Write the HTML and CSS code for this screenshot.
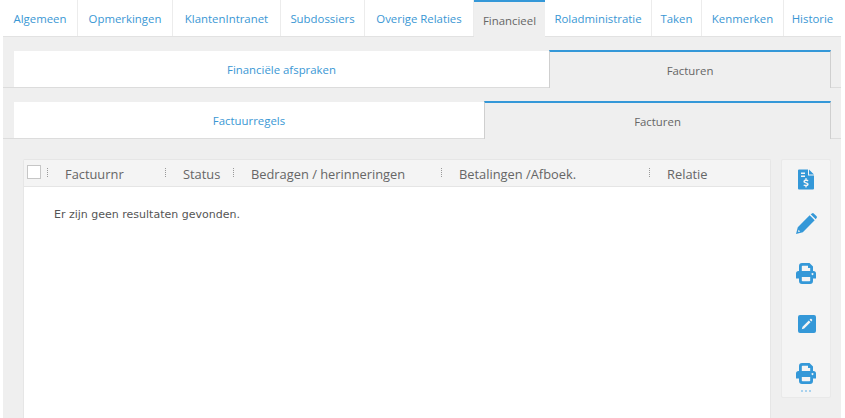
FILE: index.html
```html
<!DOCTYPE html>
<html lang="nl">
<head>
<meta charset="utf-8">
<title>Facturen</title>
<link rel="stylesheet" href="styles.css">
</head>
<body>
<div class="page">
  <nav class="tabs main-tabs">
    <a class="tab w75">Algemeen</a>
    <a class="tab w95">Opmerkingen</a>
    <a class="tab w108">KlantenIntranet</a>
    <a class="tab w84">Subdossiers</a>
    <a class="tab w109">Overige Relaties</a>
    <a class="tab active w71">Financieel</a>
    <a class="tab w107">Roladministratie</a>
    <a class="tab w50">Taken</a>
    <a class="tab w82">Kenmerken</a>
    <a class="tab w57">Historie</a>
  </nav>
  <nav class="subtabs first">
    <a class="subtab s535">Financiële afspraken</a>
    <a class="subtab active s282">Facturen</a>
  </nav>
  <nav class="subtabs second">
    <a class="subtab s470">Factuurregels</a>
    <a class="subtab active s347">Facturen</a>
  </nav>
  <div class="content">
    <section class="grid">
      <header class="grid-head">
        <span class="check"></span>
        <span class="col c1"><i class="grip"></i><b>Factuurnr</b></span>
        <span class="col c2"><i class="grip"></i><b>Status</b></span>
        <span class="col c3"><i class="grip"></i><b>Bedragen / herinneringen</b></span>
        <span class="col c4"><i class="grip"></i><b>Betalingen /Afboek.</b></span>
        <span class="col c5"><i class="grip"></i><b>Relatie</b></span>
      </header>
      <p class="empty">Er zijn geen resultaten gevonden.</p>
    </section>
    <aside class="actions">
      <svg class="icon i1" viewBox="0 0 16 20"><path fill-rule="evenodd" d="M1 0H10V6H16V19a1 1 0 0 1-1 1H1a1 1 0 0 1-1-1V1a1 1 0 0 1 1-1ZM11 0 16 5H11ZM3 3V4.500H7V3ZM3 6V7.500H7V6ZM7.400 8.500V10C6 10.300 5.400 11.100 5.400 12.100C5.400 14.300 9 13.700 9 14.900C9 15.500 7.500 15.500 5.900 14.900L5.500 16.300C6.100 16.600 6.800 16.700 7.400 16.800V18H8.600V16.800C10 16.500 10.600 15.800 10.600 14.800C10.600 12.500 7 13.100 7 12C7 11.400 8.500 11.400 10 12L10.400 10.600C9.800 10.300 9.200 10.100 8.600 10.100V8.500Z"/></svg>
      <svg class="icon i2" viewBox="0 0 20 20"><path fill-rule="evenodd" d="M14 1.200 15.200.4a1.500 1.500 0 0 1 1.900.2L19.400 2.900a1.500 1.500 0 0 1 .2 1.900L18.800 6ZM13 2.200 17.800 7 6.500 18.300 0 20 1.700 13.500ZM2.400 16 2 18 4 17.600Z"/></svg>
      <svg class="icon i3" viewBox="0 0 20 21"><path fill-rule="evenodd" d="M6 0H13.500L17 3.500V8H17.500A2.500 2.500 0 0 1 20 10.500V15.500H17V18A3 3 0 0 1 14 21H6A3 3 0 0 1 3 18V15.500H0V10.500A2.500 2.500 0 0 1 2.500 8H3V3A3 3 0 0 1 6 0ZM6.500 2.800C6 2.800 5.800 3 5.800 3.500V8H14.200V5H12V2.800ZM5.800 14V17.500C5.800 18 6 18.200 6.500 18.200H13.500C14 18.200 14.200 18 14.200 17.500V14ZM16.500 10A1 1 0 1 0 16.501 10Z"/></svg>
      <svg class="icon i4" viewBox="0 0 18 18"><path fill-rule="evenodd" d="M2 0H16A2 2 0 0 1 18 2V16A2 2 0 0 1 16 18H2A2 2 0 0 1 0 16V2A2 2 0 0 1 2 0ZM10.800 5.500 4.500 11.800 3.800 14.200 6.200 13.500 12.500 7.200ZM11.600 4.700 13.300 6.400 14 5.700C14.400 5.300 14.400 4.900 14 4.500L13.500 4C13.100 3.600 12.700 3.600 12.300 4Z"/></svg>
      <svg class="icon i5" viewBox="0 0 20 21"><path fill-rule="evenodd" d="M6 0H13.500L17 3.500V8H17.500A2.500 2.500 0 0 1 20 10.500V15.500H17V18A3 3 0 0 1 14 21H6A3 3 0 0 1 3 18V15.500H0V10.500A2.500 2.500 0 0 1 2.500 8H3V3A3 3 0 0 1 6 0ZM6.500 2.800C6 2.800 5.800 3 5.800 3.500V8H14.200V5H12V2.800ZM5.800 14V17.500C5.800 18 6 18.200 6.500 18.200H13.500C14 18.200 14.200 18 14.200 17.500V14ZM16.500 10A1 1 0 1 0 16.501 10Z"/></svg>
      <span class="more"><i></i><i></i><i></i></span>
    </aside>
  </div>
</div>
</body>
</html>
```
FILE: styles.css
```css
* { box-sizing: border-box; }
html, body { margin: 0; padding: 0; height: 100%; background: #fff; overflow: hidden; }
body { font-family: "Open Sans", "DejaVu Sans", sans-serif; font-size: 11.4px; color: #666; }
.page { width: 838px; height: 418px; margin-left: 3px; background: #efefef; overflow: hidden; }

.tabs { display: flex; height: 37px; background: #fff; border-bottom: 1px solid #e2e2e2; }
.tab { display: block; height: 36px; line-height: 37px; text-align: center; color: #3a97d4; border-right: 1px solid #ececec; white-space: nowrap; }
.tab.active { background: #efefef; color: #666; border-top: 2px solid #3498d8; border-right: 0; line-height: 38px; height: 37px; }
.tab:last-child { border-right: 0; }
.w75 { width: 75px; } .w95 { width: 95px; } .w108 { width: 108px; } .w84 { width: 84px; } .w109 { width: 109px; }
.w71 { width: 71px; } .w107 { width: 107px; } .w50 { width: 50px; } .w82 { width: 82px; } .w57 { width: 57px; }

.subtabs { display: flex; height: 37px; padding-left: 11px; border-bottom: 1px solid #dcdcdc; }
.subtabs.first { margin-top: 14px; }
.subtabs.second { margin-top: 14px; }
.subtab { display: block; height: 36px; padding-top: 1px; line-height: 35px; text-align: center; background: #fff; color: #3a97d4; white-space: nowrap; }
.subtab.active { height: 38px; background: #efefef; color: #666; border-top: 2px solid #3498d8; border-left: 1px solid #cfcfcf; border-right: 1px solid #cfcfcf; line-height: 37px; padding-top: 0; margin-top: -1px; }
.s535 { width: 535px; } .s282 { width: 282px; } .s470 { width: 470px; } .s347 { width: 347px; }

.content { display: flex; align-items: flex-start; gap: 10px; padding: 20px 0 0 20px; }
.grid { width: 748px; height: 300px; background: #fff; border: 1px solid #e6e6e6; border-bottom: 0; border-radius: 2px 2px 0 0; }
.grid-head { display: flex; height: 27px; background: #f4f4f4; border-bottom: 1px solid #e5e5e5; color: #666; font-size: 12.85px; line-height: 28px; }
.check { flex: none; width: 14px; height: 14px; margin: 5px 0 0 3px; background: #fff; border: 1px solid #c6c6c6; }
.col { display: flex; flex: none; white-space: nowrap; }
.col b { font-weight: 400; }
.grip { flex: none; width: 1px; height: 9px; margin-top: 8px; background-image: linear-gradient(#999 50%, transparent 50%); background-size: 1px 2px; }
.c1 { width: 118px; margin-left: 6px; } .c1 b { margin-left: 17px; }
.c2 { width: 68px; } .c2 b { margin-left: 17px; }
.c3 { width: 208px; } .c3 b { margin-left: 17px; }
.c4 { width: 208px; } .c4 b { margin-left: 17px; }
.c5 b { margin-left: 17px; }
.empty { margin: 21px 0 0 30px; font-family: "DejaVu Sans", sans-serif; font-size: 11px; line-height: 14px; color: #555; }

.actions { flex: none; display: flex; flex-direction: column; align-items: center; width: 50px; height: 239px; background: #f4f4f4; border: 1px solid #e9e9e9; border-radius: 2px; }
.icon { display: block; flex: none; fill: #3498d8; }
.i1 { width: 16px; height: 21px; margin-top: 9px; }
.i2 { width: 21px; height: 21px; margin-top: 23px; }
.i3 { width: 20px; height: 21px; margin-top: 29px; }
.i4 { width: 18px; height: 18px; margin: 31px 0 0 1px; }
.i5 { width: 20px; height: 21px; margin-top: 30px; }
.more { display: flex; gap: 2px; margin-top: 6px; }
.more i { display: block; width: 2px; height: 2px; background: #a9d2ee; }
```
